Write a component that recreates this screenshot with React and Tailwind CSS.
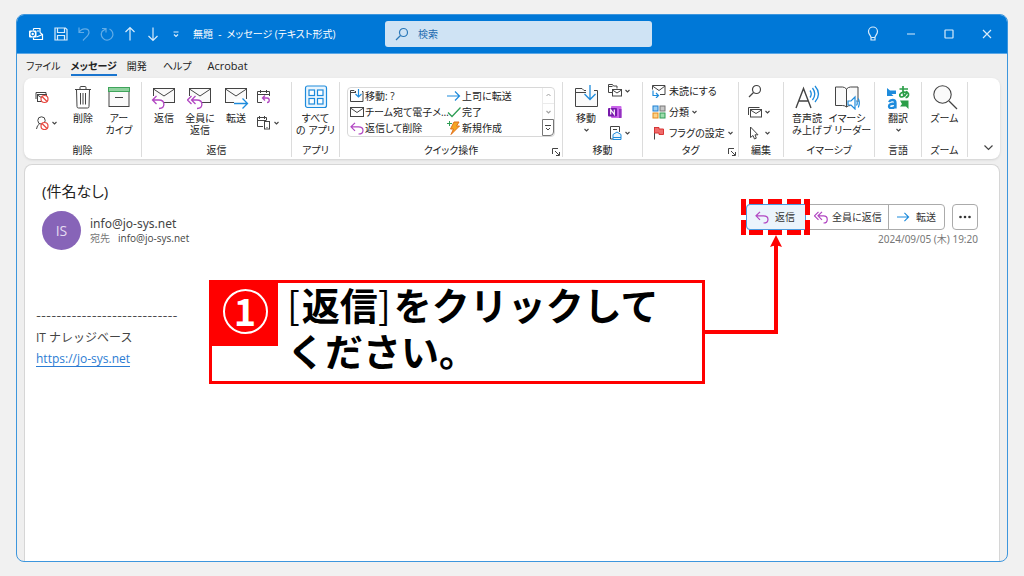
import React from "react";

const P = "#b146c2";
const B = "#1e8bdc";
const G = "#444";

function Svg({ w = 14, h = w, vb, children, className = "" }) {
  return (
    <svg width={w} height={h} viewBox={vb || `0 0 ${w} ${h}`} fill="none" stroke={G} strokeWidth="1" className={`shrink-0 ${className}`} aria-hidden="true">
      {children}
    </svg>
  );
}

const Chevron = ({ w = 5 }) => (
  <Svg w={w} h={4} vb="0 0 5 4"><path d="M.5 1l2 2 2-2" strokeWidth="1.1" /></Svg>
);

const Arrow = ({ w = 14 }) => (
  <Svg w={w} h={12} vb="0 0 14 12"><path d="M0 6h12.5M8 1.5L12.5 6 8 10.5" stroke={B} strokeWidth="1.2" /></Svg>
);

const ReplyArrow = ({ w = 14 }) => (
  <Svg w={w} h={13} vb="0 0 14 13"><path d="M5 .8L1 4.8l4 4M1 4.8h7.5c6 0 6 7.2 0 7.2" stroke={P} strokeWidth="1.2" /></Svg>
);

const ReplyAllArrow = () => (
  <Svg w={14} h={13}><path d="M4.5.8l-4 4 4 4M8 .8l-4 4 4 4M4 4.8h5.5c5 0 5 7.2 0 7.2" stroke={P} strokeWidth="1.2" /></Svg>
);

const TrashIcon = () => (
  <Svg w={24}><path d="M4 4.5h16M9 4.5V2.5q0-1 1-1h4q1 0 1 1v2M5.5 4.5l.5 17q0 1.5 1.5 1.5h9q1.500 0 1.500-1.500l.5-17M9.500 8v11.500M12 8v11.500M14.500 8v11.500" /></Svg>
);

const ArchiveIcon = () => (
  <Svg w={24}><rect x="2" y="6" width="20" height="15.500" fill="#fafafa" /><rect x="1.500" y="2.500" width="21" height="4" fill="#8fd19e" stroke="#3fa45b" /><path d="M8 12.500h8" strokeWidth="1.200" /></Svg>
);

const Envelope = () => (
  <>
    <rect x="2.500" y="4.500" width="21" height="14" fill="#fafafa" />
    <path d="M2.500 5l10.500 7L23.500 5" />
  </>
);

const MailReply = () => (
  <Svg w={26} h={26}>
    <Envelope /><path d="M0 12h9q6 3 3 12H0z" fill="#fff" stroke="none" />
    <path d="M5.500 12l-4 4 4 4M1.500 16H8c6.500 0 6.500 8.500 0 8.500" stroke={P} strokeWidth="1.300" />
  </Svg>
);

const MailReplyAll = () => (
  <Svg w={26} h={26}>
    <Envelope /><path d="M0 12h9q8 3 5 12H0z" fill="#fff" stroke="none" />
    <path d="M4.500 12l-4 4 4 4M8.500 12l-4 4 4 4M4.500 16H10c6.500 0 6.500 8.500 0 8.500" stroke={P} strokeWidth="1.300" />
  </Svg>
);

const MailForward = () => (
  <Svg w={26} h={26}>
    <Envelope /><path d="M11 15h15v10H11z" fill="#fff" stroke="none" />
    <path d="M11 19.500h13.500M19.500 14.500l5 5-5 5" stroke={B} strokeWidth="1.300" />
  </Svg>
);

const Block = ({ x, y }) => (
  <g stroke="#e8473f" strokeWidth="1.200"><circle cx={x} cy={y} r="3.500" fill="#fff" /><path d={`M${x - 2.5} ${y - 2.5}l5 5`} /></g>
);

const IgnoreIcon = () => (
  <Svg w={14}><path d="M1 9V2.500h10V5" /><rect x="2.500" y="4.500" width="9" height="7" fill="#fff" /><path d="M2.500 5l4.500 3" /><Block x={9.5} y={9} /></Svg>
);

const JunkIcon = () => (
  <Svg w={14}><circle cx="6.500" cy="4.500" r="3.700" /><path d="M1.500 13q.5-4 3-5" /><Block x={9.5} y={10} /></Svg>
);

const MeetingReply = () => (
  <Svg w={14}><path d="M5 12.500H.5v-11h12V6M.5 4.500h12M3.500 0v3M9.500 0v3" /><path d="M8 5.500L5.500 8 8 10.500M5.500 8H10c3 0 3 4.500 0 4.500" stroke={P} strokeWidth="1.300" /></Svg>
);

const MoreReply = () => (
  <Svg w={14}><path d="M6 10.500H.5v-9h9V4M.5 4.500h9M2.500 0v3M7.500 0v3" /><rect x="7.500" y="5.500" width="5" height="7.500" fill="#fff" /><path d="M9.500 11.500h1" /></Svg>
);

const AppsIcon = () => (
  <Svg w={24}>
    <rect x="1.500" y="1" width="21" height="21.500" rx="2" fill="#eaf5fd" stroke={B} strokeWidth="1.200" />
    <g fill="#fff" stroke={B} strokeWidth="1.200"><rect x="5" y="5" width="5.500" height="5.500" /><rect x="13.500" y="5" width="5.500" height="5.500" /><rect x="5" y="13.500" width="5.500" height="5.500" /><rect x="13.500" y="13.500" width="5.500" height="5.500" /></g>
  </Svg>
);

const FolderMove = () => (
  <Svg w={26}><path d="M13 6.500h-2l-2-2H2.500v18h22v-16H21M2.500 8.500H13" fill="#fafafa" /><path d="M17 1v14M11.500 10l5.500 5.500L22.500 10" stroke={B} strokeWidth="1.300" /></Svg>
);

const FolderMoveSmall = () => (
  <Svg w={14}><path d="M6 2.500H5l-1-1H.5v11h12.500v-10h-1M.5 3.500H6" /><path d="M8.500 0v8M5.500 5l3 3 3-3" stroke={B} strokeWidth="1.200" /></Svg>
);

const SmallMail = () => (
  <Svg w={14} h={12}><rect x=".5" y="1.500" width="13" height="9" /><path d="M.5 2L7 6.500 13.500 2" /></Svg>
);

const CheckIcon = () => (
  <Svg w={14} h={12}><path d="M1 6.500L5 10.500 13.500 1.500" stroke="#2f9e55" strokeWidth="1.300" /></Svg>
);

const BoltIcon = () => (
  <Svg w={14}><path d="M7 1h5L9.500 5h3L4 13.500 6.500 8H3.500z" fill="#f5a623" stroke="#e0701a" /><path d="M2.500 0v5M0 2.500h5" stroke="#2f9e55" /></Svg>
);

const RulesIcon = () => (
  <Svg w={14}><path d="M4 8.500H.5v-8h4l1 1.500H9v2.500M.5 2.500h4" /><rect x="4.500" y="5.500" width="9" height="6.500" fill="#fff" /><path d="M4.500 6L9 9l4.500-3" /></Svg>
);

const OneNoteIcon = () => (
  <Svg w={14}><rect x="3" y="1" width="10.500" height="12" rx="1" fill="#ca64ea" stroke="none" /><path d="M11 4h2.500v9H11z" fill="#9332bf" stroke="none" /><rect x="0" y="3" width="9" height="8.500" rx="1" fill="#7719aa" stroke="none" /><path d="M2.700 9.500v-5l3.600 5v-5" stroke="#fff" strokeWidth="1.200" /></Svg>
);

const ActionsIcon = () => (
  <Svg w={14}><path d="M5 13H2.500V.5h9V6M5 3.500h4" /><path d="M5 8.500l4-2.500 4 2.500v5H5z" fill="#eaf5fd" stroke={B} /><path d="M5 11.500h8" stroke={B} /></Svg>
);

const UnreadIcon = () => (
  <Svg w={14}><path d="M.5 5.500v-4h12.500v9H8M.5 2L7 6.500 13 2" /><path d="M1 6.500v5h5M4 9l2.500 2.500L4 14" stroke={B} strokeWidth="1.200" /></Svg>
);

const CategoryIcon = () => (
  <Svg w={14}><rect x="1" y="1" width="5" height="5" fill="#9bd0f5" stroke="#1e7fd0" /><rect x="8" y="1" width="5" height="5" fill="#c8c8c8" stroke="#777" /><rect x="1" y="8" width="5" height="5" fill="#fbd28b" stroke="#e38b1b" /><rect x="8" y="8" width="5" height="5" fill="#9ddcad" stroke="#2f9e55" /></Svg>
);

const FlagIcon = () => (
  <Svg w={14}><path d="M2.500 1v12.500" /><path d="M2.500 1.500H7V3h4.500v5.500H7V7H2.500z" fill="#ef6b6b" stroke="#d93636" /></Svg>
);

const SearchIcon = ({ w = 14, stroke = G }) => (
  <Svg w={w} vb="0 0 14 14"><circle cx="8.500" cy="5.500" r="4" stroke={stroke} strokeWidth="1.200" /><path d="M5.500 8.500L1 13" stroke={stroke} strokeWidth="1.200" /></Svg>
);

const RelatedIcon = () => (
  <Svg w={14}><path d="M.5 10V2.500h11" /><rect x="2.500" y="4.500" width="11" height="7.500" fill="#fff" /><path d="M2.500 5L8 8.500 13.500 5" /></Svg>
);

const PointerIcon = () => (
  <Svg w={14}><path d="M2.500 1v10.500L5 9.500l1.500 3.500 1.800-.8L7 8.800h3z" /></Svg>
);

const ReadAloud = () => (
  <Svg w={26}><path d="M2 24L9.500 4.500 17 24M4.500 17h10" strokeWidth="1.400" /><path d="M16 6.500q2.500 3.500 0 7M18.500 4q4.500 6 0 12M21 2q7 8 0 16" stroke={B} strokeWidth="1.300" /></Svg>
);

const ReaderIcon = () => (
  <Svg w={26}><path d="M12.500 5q-2-2-4-2H1.500v18.500h7q2.500 0 4 1.500V5q2-2 4-2h7.500v15M12.500 23q1.500-1.500 4-1.500" fill="#fafafa" /><path d="M14 17h3l4-4v12l-4-4h-3z" fill="#fff" stroke={B} strokeWidth="1.200" /><path d="M22.500 16.500q1.500 2.500 0 5M24.300 14.500q2 4.500 0 9" stroke={B} strokeWidth="1.200" /></Svg>
);

const TranslateIcon = () => (
  <Svg w={24}>
    <g fill="none" stroke={B} strokeWidth="2.300"><path d="M3 17q1-2 3.500-2 3 0 3 3v5.500M9.500 18.500q-6.500 0-6.500 2.700 0 2 2.500 2 3.500 0 4-3.200" /></g>
    <path d="M1 3l3 2.500h6V9H5.500l2 2H1z" fill={B} stroke="none" />
    <g stroke="#2b9e48" strokeWidth="1.700"><path d="M13.500 4h8.500M17 1q-.5 6 1 10.500M21 6q-1 5-5 6-2.500 0-2.200-2.500Q15 7 19 7q4 .5 3.500 3-.5 2.300-3 2.500" /></g>
    <path d="M14 15.500h8.500V24L20 21.500h-6l2-2.500z" fill="#2b9e48" stroke="none" />
  </Svg>
);

const ZoomIcon = () => (
  <Svg w={26}><circle cx="10.500" cy="10.500" r="8.700" fill="#fafafa" strokeWidth="1.100" /><path d="M17 17l8 8" strokeWidth="1.300" /></Svg>
);

function Big({ icon, lines, menu }) {
  return (
    <button className="flex w-9 shrink-0 flex-col items-center whitespace-nowrap leading-3">
      <span className="flex h-[30px] items-center">{icon}</span>
      {lines.map((l) => <span key={l}>{l}</span>)}
      {menu && <span className="flex h-3 items-center"><Chevron /></span>}
    </button>
  );
}

function Small({ icon, label, menu, name }) {
  return (
    <button aria-label={name} className="flex h-[14px] items-center gap-[3px] whitespace-nowrap leading-none">
      {icon}
      {label && <span>{label}</span>}
      {menu && <Chevron />}
    </button>
  );
}

const Launcher = () => (
  <button aria-label="オプション" className="absolute bottom-px right-[2px]">
    <Svg w={8}><path d="M.5 6V.5H6M3 3l4 4M7.500 4v3.500H4" /></Svg>
  </button>
);

function Group({ label, className, children, launcher }) {
  return (
    <section className={`relative flex shrink-0 flex-col border-r border-[#dcdcdc] ${className}`}>
      <div className="flex flex-1">{children}</div>
      <div className="text-center leading-[13px]">{label}</div>
      {launcher && <Launcher />}
    </section>
  );
}

function TitleButton({ name, children, className = "w-[23px]" }) {
  return (
    <button aria-label={name} className={`flex h-full items-center justify-center ${className}`}>
      <svg width="16" height="16" viewBox="0 0 16 16" fill="none" stroke="#d9ecfb" strokeWidth="1.2">{children}</svg>
    </button>
  );
}

function TitleBar() {
  return (
    <header className="flex h-[39px] items-center border-b border-[#5aa7e6] bg-[#0078d7] text-white">
      <div className="flex h-full w-[368px] shrink-0 items-center pl-[6px]">
        <TitleButton name="Outlook" className="w-[26px]">
          <path d="M5.500 2.500h6.500v4M5.500 2.500v2M9 5h2M12 6.500l2.500 2v5H5.500v-2M8.500 11l6-2.500" stroke="#fff" />
          <rect x="1" y="4.500" width="7.500" height="7" rx="1" fill="#fff" stroke="none" /><circle cx="4.700" cy="8" r="1.800" stroke="#0078d7" />
        </TitleButton>
        <TitleButton name="保存"><path d="M2 2h10.500L14 3.500V14H2zM4.500 2v4.500h7V2M4.500 14V9.500h7V14" /></TitleButton>
        <TitleButton name="元に戻す"><path d="M3 1.500v5h5M3 6.500C6 1.500 13 2 13 6.500c0 3-3 4.500-6 8" opacity=".45" /></TitleButton>
        <TitleButton name="やり直し"><path d="M3 2.500h4v4M10.500 3a5.800 5.800 0 1 1-7.500 2.500L6.500 3" opacity=".45" /></TitleButton>
        <TitleButton name="前へ"><path d="M8 14.500v-13M3.500 6L8 1.500 12.500 6" /></TitleButton>
        <TitleButton name="次へ"><path d="M8 1.500v13M3.500 10L8 14.500l4.500-4.500" /></TitleButton>
        <TitleButton name="カスタマイズ"><path d="M5.500 6h5M6 8.500l2 2 2-2" /></TitleButton>
        <h1 className="whitespace-pre pl-[6px]">無題  -  メッセージ (テキスト形式)</h1>
      </div>
      <label className="flex h-[26px] w-[267px] items-center gap-[9px] rounded-[3px] bg-[#cfe3f4] pl-[10px] text-[#1f6cb0]">
        <SearchIcon stroke="#2a78b8" />
        <input aria-label="検索" placeholder="検索" className="min-w-0 flex-1 bg-transparent outline-none placeholder:text-[#1f6cb0]" />
      </label>
      <div className="ml-auto flex h-full pr-px">
        <TitleButton name="ヒント" className="w-[38px]"><path d="M6 11.500c0-2-2.500-3-2.500-6a4.500 4.500 0 0 1 9 0c0 3-2.500 4-2.500 6v2.500H6zM6 11.500h4" /></TitleButton>
        <TitleButton name="最小化" className="w-[38px]"><path d="M4 8h8" /></TitleButton>
        <TitleButton name="最大化" className="w-[38px]"><rect x="4" y="4" width="8" height="8" rx=".5" /></TitleButton>
        <TitleButton name="閉じる" className="w-[38px]"><path d="M4 4l8 8M12 4l-8 8" /></TitleButton>
      </div>
    </header>
  );
}

const quick = [
  [<FolderMoveSmall />, "移動: ?", <Arrow />, "上司に転送"],
  [<SmallMail />, "チーム宛て電子メ…", <CheckIcon />, "完了"],
  [<ReplyArrow />, "返信して削除", <BoltIcon />, "新規作成"],
];

function Ribbon() {
  return (
    <div className="mx-[7px] flex h-[81px] shrink-0 rounded-lg bg-white pb-[2px] pt-1 shadow-sm">
      <Group label="削除" className="w-[118px]">
        <div className="flex pl-[11px]">
          <div className="flex w-[30px] flex-col gap-3 pt-2">
            <Small name="無視" icon={<IgnoreIcon />} />
            <Small name="迷惑メール" icon={<JunkIcon />} menu />
          </div>
          <Big icon={<TrashIcon />} lines={["削除"]} />
          <Big icon={<ArchiveIcon />} lines={["アー", "カイブ"]} />
        </div>
      </Group>
      <Group label="返信" className="w-[150px]">
        <div className="flex pl-1">
          <Big icon={<MailReply />} lines={["返信"]} />
          <Big icon={<MailReplyAll />} lines={["全員に", "返信"]} />
          <Big icon={<MailForward />} lines={["転送"]} />
          <div className="flex flex-col gap-3 pl-[3px] pt-2">
            <Small name="会議で返信" icon={<MeetingReply />} />
            <Small name="その他の返信" icon={<MoreReply />} menu />
          </div>
        </div>
      </Group>
      <Group label="アプリ" className="w-12">
        <div className="flex w-full justify-center"><Big icon={<AppsIcon />} lines={["すべて", "の アプリ"]} /></div>
      </Group>
      <Group label="クイック操作" className="w-[223px]" launcher>
        <div className="ml-[7px] mt-[5px] flex h-[50px] w-[208px] rounded border border-[#d8d8d8]">
          <div className="flex flex-1 flex-col">
            {quick.map(([i1, t1, i2, t2]) => (
              <div key={t1} className="grid h-4 grid-cols-[97px_1fr] whitespace-nowrap leading-4">
                <button className="flex items-center gap-px pl-[2px]">{i1}<span>{t1}</span></button>
                <button className="flex items-center gap-px pl-[2px]">{i2}<span>{t2}</span></button>
              </div>
            ))}
          </div>
          <div className="flex w-3 flex-col">
            <button aria-label="上へ" className="flex h-4 items-center justify-center border-b border-l border-[#d8d8d8] opacity-50"><Svg w={5} h={4}><path d="M.5 3l2-2 2 2" /></Svg></button>
            <button aria-label="下へ" className="flex h-4 items-center justify-center border-l border-[#d8d8d8] opacity-50"><Chevron /></button>
            <button aria-label="その他" className="flex h-[17px] items-center justify-center rounded-br border border-[#777]"><Svg w={6}><path d="M0 .5h6M1 3l2 2 2-2" /></Svg></button>
          </div>
        </div>
      </Group>
      <Group label="移動" className="w-[80px]">
        <div className="flex pl-[5px]">
          <Big icon={<FolderMove />} lines={["移動"]} menu />
          <div className="flex flex-col gap-[7px] pl-1 pt-[2px]">
            <Small name="ルール" icon={<RulesIcon />} menu />
            <Small name="OneNote" icon={<OneNoteIcon />} />
            <Small name="アクション" icon={<ActionsIcon />} menu />
          </div>
        </div>
      </Group>
      <Group label="タグ" className="w-[96px]" launcher>
        <div className="flex flex-col gap-[7px] pl-[9px] pt-[2px]">
          <Small icon={<UnreadIcon />} label="未読にする" />
          <Small icon={<CategoryIcon />} label="分類" menu />
          <Small icon={<FlagIcon />} label="フラグの設定" menu />
        </div>
      </Group>
      <Group label="編集" className="w-[45px]">
        <div className="flex flex-col gap-[7px] pl-[9px] pt-[2px]">
          <Small name="検索" icon={<SearchIcon />} />
          <Small name="関連" icon={<RelatedIcon />} menu />
          <Small name="選択" icon={<PointerIcon />} menu />
        </div>
      </Group>
      <Group label="イマーシブ" className="w-[91px]">
        <div className="flex gap-1 pl-[5px]">
          <Big icon={<ReadAloud />} lines={["音声読", "み上げ"]} />
          <Big icon={<ReaderIcon />} lines={["イマーシ", "ブ リーダー"]} />
        </div>
      </Group>
      <Group label="言語" className="w-[47px]">
        <div className="flex w-full justify-center"><Big icon={<TranslateIcon />} lines={["翻訳"]} menu /></div>
      </Group>
      <Group label="ズーム" className="w-[46px]">
        <div className="flex w-full justify-center"><Big icon={<ZoomIcon />} lines={["ズーム"]} /></div>
      </Group>
      <button aria-label="リボンを折りたたむ" className="ml-auto flex items-end pb-[6px] pr-[7px]"><Svg w={9} h={6}><path d="M.5.5l4 4 4-4" strokeWidth="1.200" /></Svg></button>
    </div>
  );
}

function Callout() {
  return (
    <>
      <div className="absolute right-[294px] top-[115px] flex w-[496px] items-start border-[3px] border-[#f00] bg-white">
        <div className="flex h-[63px] w-[66px] shrink-0 items-start justify-center bg-[#f00] pt-[6px]">
          <div className="flex size-[45px] items-center justify-center rounded-full border-2 border-white pb-1 font-['Noto_Sans_CJK_JP',sans-serif] text-[38px] font-bold leading-none text-white">1</div>
        </div>
        <p className="-mt-[2px] whitespace-nowrap pb-2 pl-[9px] font-['Noto_Sans_CJK_JP',sans-serif] text-[38px] font-bold leading-[46px] text-black [font-feature-settings:normal]">
          <span className="pr-[2px] font-normal">[</span>返信<span className="pr-[3px] font-normal">]</span>をクリックして<br />ください。
        </p>
      </div>
      <svg className="pointer-events-none absolute right-[189px] top-[34px]" width="105" height="136" viewBox="0 0 105 136" fill="none" aria-hidden="true">
        <path d="M0 133H71V46" stroke="#f00" strokeWidth="4" />
        <path d="M71 36l6 12q-6-3-12 0z" fill="#f00" />
        <path d="M38.500 0v16M38.500 21v15M44 2.500h14M63 2.500h14M82 2.500h14M44 33.500h14M63 33.500h14M82 33.500h14M102.500 0v16M102.500 21v15M99 2.500h6M99 33.500h6" stroke="#f00" strokeWidth="5" />
      </svg>
    </>
  );
}

function Message() {
  return (
    <main className="relative mx-[7px] mt-[5px] flex-1 rounded-t-lg border border-b-0 border-[#d6d6d6] bg-white">
      <h2 className="pl-[17px] pt-[15px] text-[15px] leading-[22px] text-[#222]">(件名なし)</h2>
      <div className="flex items-start pl-[17px] pr-[21px] pt-[9px]">
        <div className="flex size-[39px] items-center justify-center rounded-full bg-[#8764b8] text-sm text-[#e6dcf2]">IS</div>
        <div className="pl-[9px] pt-[5px] text-[#444]">
          <div className="font-['Noto_Sans',sans-serif] text-[12px] leading-4">info@jo-sys.net</div>
          <div className="flex gap-2 text-[10px] leading-3"><span className="text-[#777]">宛先</span><span>info@jo-sys.net</span></div>
        </div>
        <div className="-mt-[7px] ml-auto flex flex-col items-end">
          <div className="flex gap-[7px]">
            <div className="flex h-[26px] rounded border border-[#ababab] text-[#333]">
              <button className="-my-px -ml-px flex w-[60px] items-center gap-[6px] rounded-l border border-[#4a9be0] bg-[#ebf4fc] pl-2"><ReplyArrow />返信</button>
              <button className="flex w-[83px] items-center gap-1 border-r border-[#ababab] pl-2"><ReplyAllArrow />全員に返信</button>
              <button className="flex w-[55px] items-center gap-[6px] pl-2"><Arrow w={13} />転送</button>
            </div>
            <button aria-label="その他" className="flex h-[26px] w-[26px] items-center justify-center rounded border border-[#ababab]">
              <Svg w={14} h={4}><g fill="#333" stroke="none"><circle cx="2.500" cy="2" r="1.300" /><circle cx="7" cy="2" r="1.300" /><circle cx="11.500" cy="2" r="1.300" /></g></Svg>
            </button>
          </div>
          <time className="pt-[3px] font-['Noto_Sans','Noto_Sans_CJK_JP',sans-serif] text-[10px] leading-3 text-[#777]">2024/09/05 (木) 19:20</time>
        </div>
      </div>
      <div className="pl-[11px] pt-14 text-[12px] leading-[21px] text-[#444]">
        <div className="font-['Inter',sans-serif] text-[11px] leading-[21px]">----------------------------</div>
        <div className="[font-feature-settings:normal]">IT ナレッジベース</div>
        <a href="https://jo-sys.net" className="inline-block border-b border-[#2b7cd3] leading-[15px] text-[#2b7cd3]">https://jo-sys.net</a>
      </div>
      <Callout />
    </main>
  );
}

export default function App() {
  return (
    <div className="flex min-h-screen flex-col bg-[#f1f1f1] px-4 py-[14px] font-['Open_Sans','Noto_Sans_CJK_JP',sans-serif] text-[10px] text-[#222] [font-feature-settings:'palt']">
      <div className="flex flex-1 flex-col overflow-hidden rounded-lg border border-[#3d96dd] bg-[#efefef]">
        <TitleBar />
        <nav className="flex h-6 shrink-0 items-center gap-[10px] pl-[9px]">
          <a href="#file">ファイル</a>
          <a href="#message" className="border-b-2 border-[#1a75cf] pt-[2px] font-bold leading-4">メッセージ</a>
          <a href="#developer">開発</a>
          <a href="#help" className="pl-[6px]">ヘルプ</a>
          <a href="#acrobat" className="pl-[6px] text-[11px]">Acrobat</a>
        </nav>
        <Ribbon />
        <Message />
      </div>
    </div>
  );
}
